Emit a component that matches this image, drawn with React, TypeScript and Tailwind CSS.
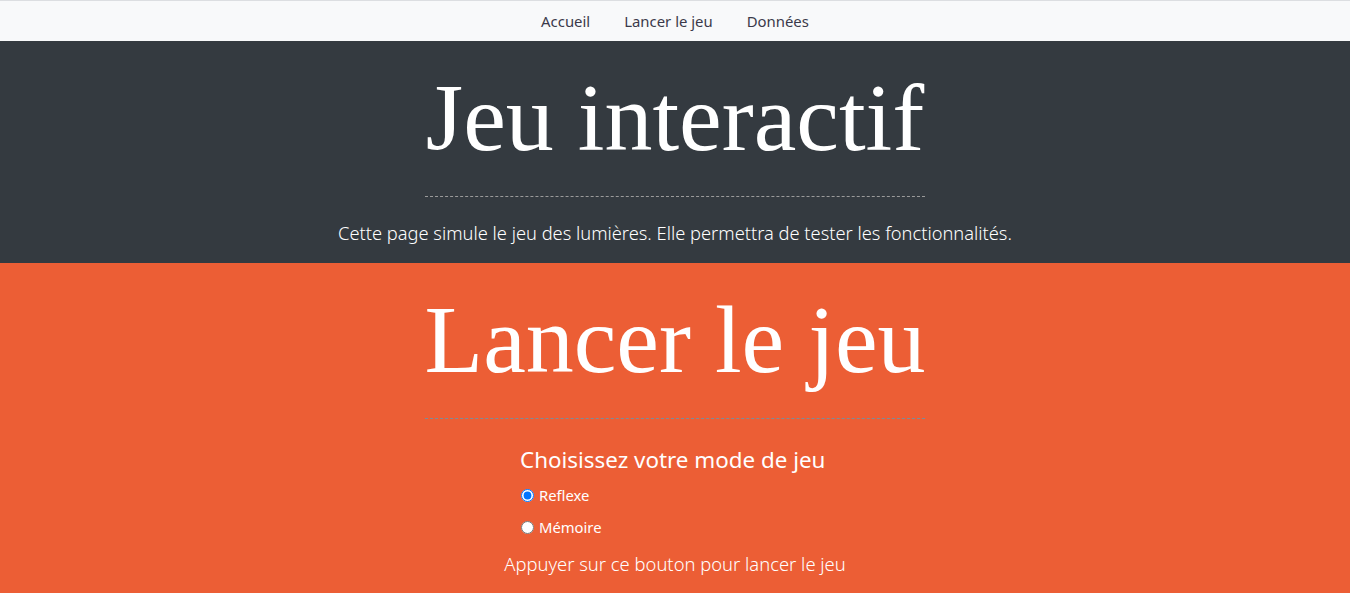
import React, { useState } from "react";

const serif = { fontFamily: '"Liberation Serif", "Times New Roman", serif' };

const App = () => {
  const [mode, setMode] = useState("reflexe");

  return (
    <div className="min-h-screen w-full bg-[#ec5e35] font-['Noto_Sans',sans-serif]">
      {/* navbar */}
      <nav className="h-[41px] w-full border-t border-[#dcdee1] bg-[#f8f9fa] flex justify-center items-center">
        <a href="#" className="px-[17px] text-[14.9px] text-[#3b3a4a]">Accueil</a>
        <a href="#" className="px-[17px] text-[14.9px] text-[#3b3a4a]">Lancer le jeu</a>
        <a href="#" className="px-[17px] text-[14.9px] text-[#3b3a4a]">Données</a>
      </nav>

      {/* jumbotron */}
      <header className="bg-[#343a40] text-white flex flex-col items-center pt-[19px]">
        <h1 className="text-[96px] leading-[1.2]" style={serif}>
          Jeu interactif
        </h1>
        <hr className="w-[500px] mt-[21px] border-0 border-t border-dashed border-[#9a9a9a]" />
        <p className="mt-[21px] mb-[15px] text-[18.3px] leading-[30px] font-light">
          Cette page simule le jeu des lumières. Elle permettra de tester les fonctionnalités.
        </p>
      </header>

      {/* game */}
      <section className="text-white flex flex-col items-center pt-[19px]">
        <h1 className="text-[96px] leading-[1.2]" style={serif}>
          Lancer le jeu
        </h1>
        <hr className="w-[500px] mt-[21px] border-0 border-t border-dashed border-[#7c8c98]" />
        <div className="mt-[25px] w-[310px]">
          <h4 className="text-[22.4px] leading-[32px] whitespace-nowrap">Choisissez votre mode de jeu</h4>
          <label className="mt-[3px] flex items-center gap-[5px] text-[14.8px] h-[32px]">
            <input
              type="radio"
              name="mode"
              checked={mode === "reflexe"}
              onChange={() => setMode("reflexe")}
              className="m-0 ml-[1px]"
            />
            Reflexe
          </label>
          <label className="flex items-center gap-[5px] text-[14.8px] h-[32px]">
            <input
              type="radio"
              name="mode"
              checked={mode === "memoire"}
              onChange={() => setMode("memoire")}
              className="m-0 ml-[1px]"
            />
            Mémoire
          </label>
        </div>
        <p className="mt-[6px] text-[18.4px] leading-[30px] font-light">
          Appuyer sur ce bouton pour lancer le jeu
        </p>
      </section>
    </div>
  );
};

export default App;
